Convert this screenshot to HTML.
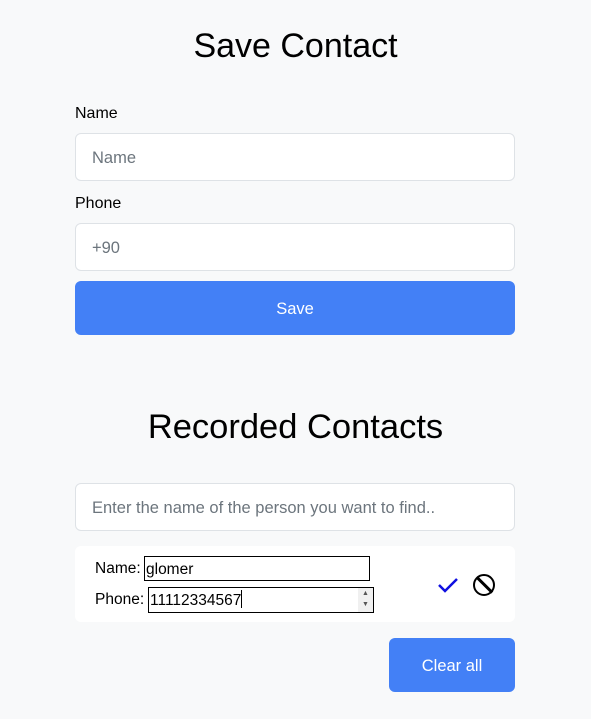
<!DOCTYPE html>
<html><head><meta charset="utf-8"><style>
*{box-sizing:border-box;margin:0;padding:0}
body{width:591px;height:719px;background:#f8f9fa;font-family:"Liberation Sans",sans-serif;color:#000;position:relative;overflow:hidden}
.abs{position:absolute}
h1{position:absolute;left:0;width:591px;text-align:center;font-weight:400;font-size:34px}
.lbl{position:absolute;left:75px;font-size:16px}
.inp{position:absolute;left:75px;width:440px;height:48px;background:#fff;border:1px solid #dee2e6;border-radius:6px;font-size:16.5px;color:#6c757d;padding-left:16px;line-height:48px}
.btn{position:absolute;background:#4380f6;border-radius:6px;color:#fff;font-size:16.5px;text-align:center}
</style></head><body>
<h1 style="top:27px">Save Contact</h1>
<div class="lbl" style="top:105px">Name</div>
<div class="inp" style="top:133px">Name</div>
<div class="lbl" style="top:195px">Phone</div>
<div class="inp" style="top:223px">+90</div>
<div class="btn" style="left:75px;top:281px;width:440px;height:54px;line-height:56px">Save</div>
<h1 style="top:408px;font-size:34.5px">Recorded Contacts</h1>
<div class="inp" style="top:483px">Enter the name of the person you want to find..</div>
<div class="abs" style="left:75px;top:546px;width:440px;height:76px;background:#fff;border-radius:6px"></div>
<div class="abs" style="left:95px;top:560px;font-size:15.5px">Name:</div>
<div class="abs" style="left:144px;top:556px;width:226px;height:25px;border:1px solid #000;font-size:15.5px;line-height:25px;padding-left:1px">glomer</div>
<div class="abs" style="left:95px;top:591px;font-size:15.5px">Phone:</div>
<div class="abs" style="left:148px;top:587px;width:226px;height:26px;border:1px solid #000;font-size:15.5px;line-height:25px;padding-left:1px">11112334567<span style="display:inline-block;width:1px;height:18px;background:#000;vertical-align:-3px"></span></div>
<div class="abs" style="left:358px;top:588px;width:15px;height:24px;background:#f0f0f0;font-size:7px;color:#555;text-align:center;line-height:11px">▲<br>▼</div>
<svg class="abs" style="left:437px;top:576px" width="22" height="18" viewBox="0 0 22 18"><path d="M2 9 L8 15 L20 3" fill="none" stroke="#1010e0" stroke-width="2.5"/></svg>
<div class="abs" style="left:473px;top:574px;width:22px;height:22px;border:2.5px solid #000;border-radius:50%"><div style="position:absolute;left:7.5px;top:-2px;width:2.5px;height:22px;background:#000;transform:rotate(-45deg)"></div></div>
<div class="btn" style="left:389px;top:638px;width:126px;height:54px;line-height:56px">Clear all</div>
</body></html>
